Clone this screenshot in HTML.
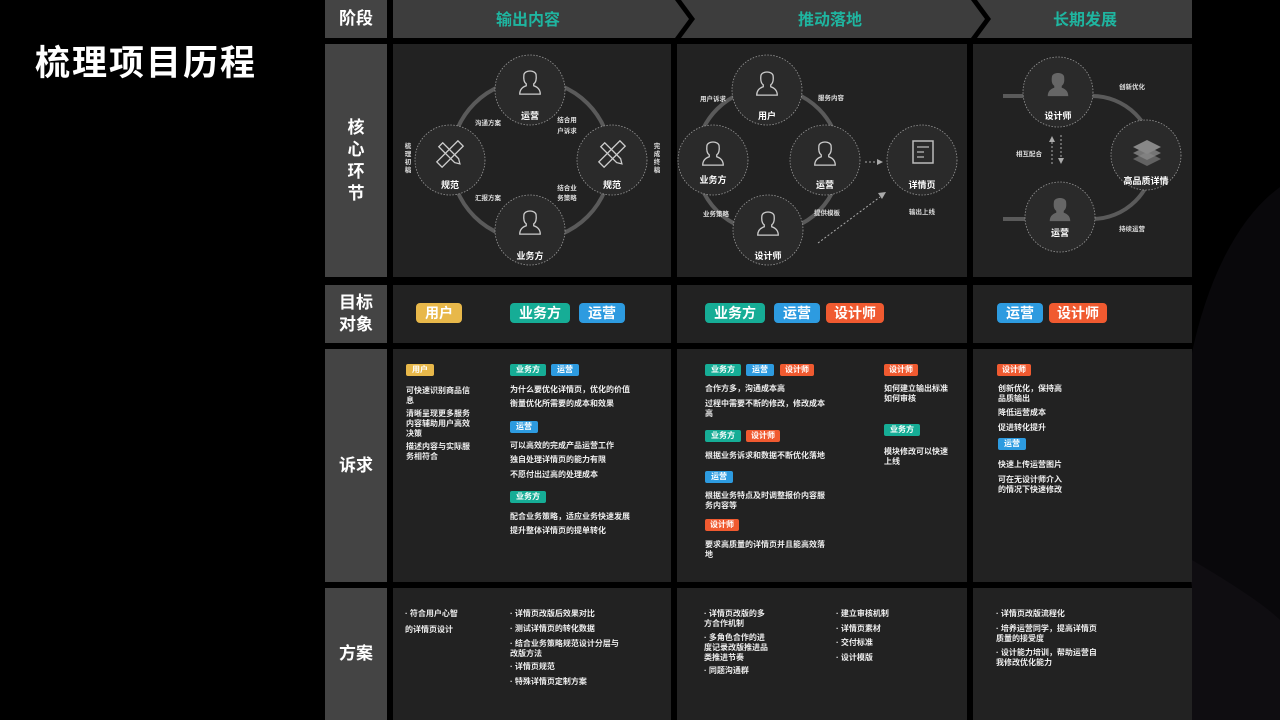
<!DOCTYPE html>
<html><head><meta charset="utf-8"><style>
*{margin:0;padding:0;box-sizing:border-box}
html,body{width:1280px;height:720px;overflow:hidden}
body{background:#000;position:relative;font-family:"Liberation Sans","Noto Sans CJK SC",sans-serif;color:#eee}
.a{position:absolute}
.cell{position:absolute;background:#222}
.lab{position:absolute;background:#444;color:#fff;font-size:17px;font-weight:bold;display:flex;align-items:center;justify-content:center;text-align:center;line-height:22px}
.tg{position:absolute;height:20px;line-height:20px;border-radius:4px;color:#fff;font-size:14px;font-weight:bold;text-align:center}
.st{position:absolute;height:12px;line-height:12px;border-radius:2px;color:#fff;font-size:8px;font-weight:bold;text-align:center}
.y{background:#e8b84a}.g{background:#16ad96}.b{background:#2d9be0}.o{background:#f05a30}
.t{position:absolute;font-size:8px;line-height:10px;color:#eee;font-weight:bold}
</style></head><body>
<svg class="a" style="left:0;top:0" width="1280" height="720">
<ellipse cx="1330" cy="470" rx="150" ry="300" fill="#09080b"/>
<path d="M1192 560 Q1260 600 1280 620 L1280 720 L1192 720Z" fill="#0f0d11"/>
</svg>
<div class="a" style="left:35px;top:35px;font-size:35px;font-weight:bold;color:#fff;letter-spacing:2px">梳理项目历程</div>

<div class="lab" style="left:325px;top:0;width:62px;height:38px">阶段</div>
<svg class="a" style="left:393px;top:0" width="800" height="40">
<polygon points="0,0 282,0 296,19 282,38 0,38" fill="#3d3d3d"/>
<polygon points="288,0 578,0 592,19 578,38 288,38 302,19" fill="#3d3d3d"/>
<polygon points="584,0 799,0 799,38 584,38 598,19" fill="#3d3d3d"/>
<text x="135" y="25" fill="#1fb5a0" font-size="16" font-weight="bold" text-anchor="middle" font-family="Liberation Sans,Noto Sans CJK SC,sans-serif">输出内容</text>
<text x="437" y="25" fill="#1fb5a0" font-size="16" font-weight="bold" text-anchor="middle" font-family="Liberation Sans,Noto Sans CJK SC,sans-serif">推动落地</text>
<text x="692" y="25" fill="#1fb5a0" font-size="16" font-weight="bold" text-anchor="middle" font-family="Liberation Sans,Noto Sans CJK SC,sans-serif">长期发展</text>
</svg>

<div class="lab" style="left:325px;top:44px;width:62px;height:233px"><div style="width:20px">核心环节</div></div>
<div class="lab" style="left:325px;top:285px;width:62px;height:58px">目标<br>对象</div>
<div class="lab" style="left:325px;top:349px;width:62px;height:233px">诉求</div>
<div class="lab" style="left:325px;top:588px;width:62px;height:132px">方案</div>

<div class="cell" style="left:393px;top:44px;width:278px;height:233px"></div>
<div class="cell" style="left:677px;top:44px;width:290px;height:233px"></div>
<div class="cell" style="left:973px;top:44px;width:219px;height:233px"></div>
<div class="cell" style="left:393px;top:285px;width:278px;height:58px"></div>
<div class="cell" style="left:677px;top:285px;width:290px;height:58px"></div>
<div class="cell" style="left:973px;top:285px;width:219px;height:58px"></div>
<div class="cell" style="left:393px;top:349px;width:278px;height:233px"></div>
<div class="cell" style="left:677px;top:349px;width:290px;height:233px"></div>
<div class="cell" style="left:973px;top:349px;width:219px;height:233px"></div>
<div class="cell" style="left:393px;top:588px;width:278px;height:132px"></div>
<div class="cell" style="left:677px;top:588px;width:290px;height:132px"></div>
<div class="cell" style="left:973px;top:588px;width:219px;height:132px"></div>

<svg class="a" style="left:0;top:0" width="1280" height="290" font-family="Liberation Sans,Noto Sans CJK SC,sans-serif" font-weight="bold">
<defs>
<symbol id="p" viewBox="0 0 30 30"><path d="M4 28 C4 22 8 20 11 19 L11 17 C8 15 8 11 8.5 7 C9.5 2 20.5 2 21.5 7 C22 11 22 15 19 17 L19 19 C22 20 26 22 26 28 Z" fill="none" stroke="#ccc" stroke-width="1.4"/></symbol>
<symbol id="pf" viewBox="0 0 30 30"><path d="M4 28 C4 22 8 20 11 19 L11 17 C8 15 8 11 8.5 7 C9.5 2 20.5 2 21.5 7 C22 11 22 15 19 17 L19 19 C22 20 26 22 26 28 Z" fill="#666"/></symbol>
<symbol id="x" viewBox="0 0 30 30"><g fill="none" stroke="#ccc" stroke-width="1.4"><rect x="11" y="-1" width="8" height="32" transform="rotate(45 15 15)"/><path d="M12 1 L18 1 L18 25 L15 30 L12 25 Z" transform="rotate(-45 15 15)"/></g></symbol>
</defs>
<!-- col1 -->
<circle cx="531" cy="160" r="80" fill="none" stroke="#5a5a5a" stroke-width="4"/>
<circle cx="768" cy="160" r="72" fill="none" stroke="#5a5a5a" stroke-width="4"/>
<path d="M1003 96 H1025 M1003 219 H1025" stroke="#5a5a5a" stroke-width="4"/>
<path d="M1092 96 A61.5 61.5 0 0 1 1092 219" stroke="#5a5a5a" stroke-width="4" fill="none"/>
<g fill="#2a2a2a" stroke="#999" stroke-width="0.8" stroke-dasharray="1.5 1.5">
<circle cx="530" cy="90" r="35"/><circle cx="450" cy="160" r="35"/><circle cx="612" cy="160" r="35"/><circle cx="530" cy="230" r="35"/>
<circle cx="767" cy="90" r="35"/><circle cx="713" cy="160" r="35"/><circle cx="825" cy="160" r="35"/><circle cx="768" cy="230" r="35"/><circle cx="922" cy="160" r="35"/>
<circle cx="1058" cy="92" r="35"/><circle cx="1060" cy="217" r="35"/><circle cx="1146" cy="155" r="35"/>
</g>
<use href="#p" x="516" y="68" width="28" height="28"/>
<use href="#p" x="516" y="208" width="28" height="28"/>
<use href="#x" x="436" y="140" width="28" height="28"/>
<use href="#x" x="598" y="140" width="28" height="28"/>
<g fill="#fff" font-size="9" text-anchor="middle">
<text x="530" y="119">运营</text><text x="450" y="188">规范</text><text x="612" y="188">规范</text><text x="530" y="259">业务方</text>
</g>
<g fill="#ddd" font-size="6.5" text-anchor="middle">
<text x="488" y="125">沟通方案</text><text x="567" y="122">结合用</text><text x="567" y="133">户诉求</text>
<text x="488" y="200">汇报方案</text><text x="567" y="190">结合业</text><text x="567" y="200">务策略</text>
<text x="408" y="148">梳</text><text x="408" y="156">理</text><text x="408" y="164">初</text><text x="408" y="172">稿</text>
<text x="657" y="148">完</text><text x="657" y="156">成</text><text x="657" y="164">终</text><text x="657" y="172">稿</text>
</g>
<!-- col2 -->
<use href="#p" x="753" y="69" width="28" height="28"/>
<use href="#p" x="699" y="139" width="28" height="28"/>
<use href="#p" x="811" y="139" width="28" height="28"/>
<use href="#p" x="754" y="209" width="28" height="28"/>
<rect x="913" y="141" width="20" height="22" fill="none" stroke="#bbb" stroke-width="1.5"/>
<path d="M917 147 H929 M917 152 H924 M917 157 H924" stroke="#bbb" stroke-width="1.3"/>
<g fill="#fff" font-size="9" text-anchor="middle">
<text x="767" y="119">用户</text><text x="713" y="183">业务方</text><text x="825" y="188">运营</text><text x="768" y="259">设计师</text><text x="922" y="188">详情页</text>
</g>
<g fill="#ddd" font-size="6.5" text-anchor="middle">
<text x="713" y="101">用户诉求</text><text x="831" y="100">服务内容</text><text x="716" y="216">业务策略</text><text x="827" y="215">提供模板</text><text x="922" y="214">输出上线</text>
</g>
<path d="M865 162 H877" stroke="#aaa" stroke-dasharray="2 2"/><polygon points="877,159 883,162 877,165" fill="#aaa"/>
<path d="M818 243 L880 197" stroke="#aaa" stroke-dasharray="2 2"/><polygon points="878,193 886,192 882,199" fill="#aaa"/>
<!-- col3 -->
<use href="#pf" x="1044" y="70" width="28" height="28"/>
<use href="#pf" x="1046" y="195" width="28" height="28"/>
<g fill="#888"><polygon points="1147,140 1161,147 1147,154 1133,147"/><polygon points="1147,146 1161,153 1147,160 1133,153" opacity=".8"/><polygon points="1147,152 1161,159 1147,166 1133,159" opacity=".6"/></g>
<g fill="#fff" font-size="9" text-anchor="middle">
<text x="1058" y="119">设计师</text><text x="1060" y="236">运营</text><text x="1146" y="184">高品质详情</text>
</g>
<g fill="#ddd" font-size="6.5" text-anchor="middle">
<text x="1132" y="89">创新优化</text><text x="1132" y="231">持续运营</text><text x="1029" y="156">相互配合</text>
</g>
<path d="M1052 142 V165 M1061 135 V158" stroke="#aaa" stroke-dasharray="2 2"/>
<polygon points="1049,142 1052,136 1055,142" fill="#aaa"/><polygon points="1058,158 1061,164 1064,158" fill="#aaa"/>
</svg>

<div class="tg y" style="left:416px;top:303px;width:46px">用户</div>
<div class="tg g" style="left:510px;top:303px;width:60px">业务方</div>
<div class="tg b" style="left:579px;top:303px;width:46px">运营</div>
<div class="tg g" style="left:705px;top:303px;width:60px">业务方</div>
<div class="tg b" style="left:774px;top:303px;width:46px">运营</div>
<div class="tg o" style="left:826px;top:303px;width:58px">设计师</div>
<div class="tg b" style="left:997px;top:303px;width:46px">运营</div>
<div class="tg o" style="left:1049px;top:303px;width:58px">设计师</div>

<div class="st y" style="left:406px;top:364px;width:28px">用户</div>
<div class="t" style="left:406px;top:386px;width:66px">可快速识别商品信息</div>
<div class="t" style="left:406px;top:409px;width:66px">清晰呈现更多服务内容辅助用户高效决策</div>
<div class="t" style="left:406px;top:442px;width:66px">描述内容与实际服务相符合</div>
<div class="st g" style="left:510px;top:364px;width:36px">业务方</div>
<div class="st b" style="left:551px;top:364px;width:28px">运营</div>
<div class="t" style="left:510px;top:385px">为什么要优化详情页，优化的价值</div>
<div class="t" style="left:510px;top:399px">衡量优化所需要的成本和效果</div>
<div class="st b" style="left:510px;top:421px;width:28px">运营</div>
<div class="t" style="left:510px;top:441px">可以高效的完成产品运营工作</div>
<div class="t" style="left:510px;top:455px">独自处理详情页的能力有限</div>
<div class="t" style="left:510px;top:470px">不愿付出过高的处理成本</div>
<div class="st g" style="left:510px;top:491px;width:36px">业务方</div>
<div class="t" style="left:510px;top:512px">配合业务策略，适应业务快速发展</div>
<div class="t" style="left:510px;top:526px">提升整体详情页的提单转化</div>

<div class="st g" style="left:705px;top:364px;width:36px">业务方</div>
<div class="st b" style="left:746px;top:364px;width:28px">运营</div>
<div class="st o" style="left:780px;top:364px;width:34px">设计师</div>
<div class="t" style="left:705px;top:384px">合作方多，沟通成本高</div>
<div class="t" style="left:705px;top:399px;width:122px">过程中需要不断的修改，修改成本高</div>
<div class="st g" style="left:705px;top:430px;width:36px">业务方</div>
<div class="st o" style="left:746px;top:430px;width:34px">设计师</div>
<div class="t" style="left:705px;top:451px">根据业务诉求和数据不断优化落地</div>
<div class="st b" style="left:705px;top:471px;width:28px">运营</div>
<div class="t" style="left:705px;top:491px;width:122px">根据业务特点及时调整报价内容服务内容等</div>
<div class="st o" style="left:705px;top:519px;width:34px">设计师</div>
<div class="t" style="left:705px;top:540px;width:122px">要求高质量的详情页并且能高效落地</div>
<div class="st o" style="left:884px;top:364px;width:34px">设计师</div>
<div class="t" style="left:884px;top:384px;width:66px">如何建立输出标准如何审核</div>
<div class="st g" style="left:884px;top:424px;width:36px">业务方</div>
<div class="t" style="left:884px;top:447px;width:66px">模块修改可以快速上线</div>

<div class="st o" style="left:997px;top:364px;width:34px">设计师</div>
<div class="t" style="left:998px;top:384px;width:66px">创新优化，保持高品质输出</div>
<div class="t" style="left:998px;top:408px">降低运营成本</div>
<div class="t" style="left:998px;top:423px">促进转化提升</div>
<div class="st b" style="left:998px;top:438px;width:28px">运营</div>
<div class="t" style="left:998px;top:460px">快速上传运营图片</div>
<div class="t" style="left:998px;top:475px;width:66px">可在无设计师介入的情况下快速修改</div>

<div class="t" style="left:405px;top:609px">· 符合用户心智</div>
<div class="t" style="left:405px;top:625px">的详情页设计</div>
<div class="t" style="left:510px;top:609px">· 详情页改版后效果对比</div>
<div class="t" style="left:510px;top:624px">· 测试详情页的转化数据</div>
<div class="t" style="left:510px;top:639px;width:110px">· 结合业务策略规范设计分层与改版方法</div>
<div class="t" style="left:510px;top:662px">· 详情页规范</div>
<div class="t" style="left:510px;top:677px">· 特殊详情页定制方案</div>
<div class="t" style="left:704px;top:609px;width:66px">· 详情页改版的多方合作机制</div>
<div class="t" style="left:704px;top:633px;width:66px">· 多角色合作的进度记录改版推进品类推进节奏</div>
<div class="t" style="left:704px;top:666px">· 同题沟通群</div>
<div class="t" style="left:836px;top:609px">· 建立审核机制</div>
<div class="t" style="left:836px;top:624px">· 详情页素材</div>
<div class="t" style="left:836px;top:638px">· 交付标准</div>
<div class="t" style="left:836px;top:653px">· 设计模版</div>
<div class="t" style="left:996px;top:609px">· 详情页改版流程化</div>
<div class="t" style="left:996px;top:624px;width:104px">· 培养运营同学，提高详情页质量的接受度</div>
<div class="t" style="left:996px;top:648px;width:104px">· 设计能力培训，帮助运营自我修改优化能力</div>
</body></html>
